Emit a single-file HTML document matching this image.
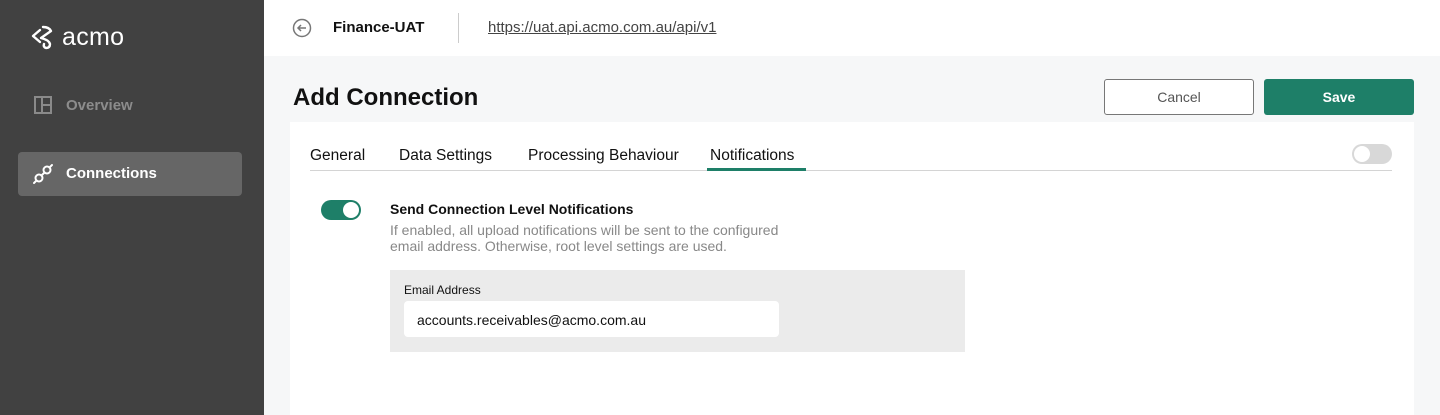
<!DOCTYPE html>
<html><head><meta charset="utf-8"><style>
*{box-sizing:border-box;margin:0;padding:0}
body{width:1440px;height:415px;overflow:hidden;font-family:"Liberation Sans",sans-serif;background:#f6f7f8;position:relative}
.abs{position:absolute}
.side{left:0;top:0;width:264px;height:415px;background:#414141}
.hdr{left:264px;top:0;width:1176px;height:56px;background:#fff}
.card{left:290px;top:122px;width:1124px;height:293px;background:#fff}
.t{position:absolute;white-space:nowrap}
</style></head><body>
<div class="abs side">
  <svg class="abs" style="left:31px;top:24px" width="26" height="26" viewBox="0 0 26 26" fill="none" stroke="#fff" stroke-width="2.4" stroke-linecap="round" stroke-linejoin="round">
    <path d="M9 6 L2 12 L9 18"/><path d="M12 3 Q18 3 20 7 L10 14 Q18 16 19 20 Q19 24 15 24 Q12 23 13 20"/>
  </svg>
  <div class="t" style="left:62px;top:23px;color:#fff;font-size:25px;letter-spacing:0.3px">acmo</div>
  <svg class="abs" style="left:34px;top:96px" width="18" height="18" viewBox="0 0 18 18" fill="none" stroke="#8a8a8a" stroke-width="2"><rect x="1" y="1" width="16" height="16"/><path d="M8 1V17M8 9H17"/></svg>
  <div class="t" style="left:66px;top:97px;color:#8c8c8c;font-size:15px;font-weight:bold">Overview</div>
  <div class="abs" style="left:18px;top:152px;width:224px;height:44px;background:#666;border-radius:4px"></div>
  <svg class="abs" style="left:32px;top:163px" width="22" height="22" viewBox="0 0 22 22" fill="none" stroke="#fff" stroke-width="2" stroke-linecap="round"><circle cx="7" cy="15" r="3.5"/><circle cx="15" cy="7" r="3.5"/><path d="M2 20l2.5-2.5M20 2l-2.5 2.5M9.5 12.5l3-3"/></svg>
  <div class="t" style="left:66px;top:165px;color:#fff;font-size:15px;font-weight:bold">Connections</div>
</div>
<div class="abs hdr">
  <svg class="abs" style="left:28px;top:18px" width="20" height="20" viewBox="0 0 20 20" fill="none" stroke="#777" stroke-width="1.5"><circle cx="10" cy="10" r="8.5"/><path d="M14 10H6M9 7l-3 3 3 3"/></svg>
  <div class="t" style="left:69px;top:19px;font-size:15px;font-weight:bold;color:#111">Finance-UAT</div>
  <div class="abs" style="left:194px;top:13px;width:1px;height:30px;background:#ccc"></div>
  <div class="t" style="left:224px;top:19px;font-size:15px;color:#444;text-decoration:underline">https://uat.api.acmo.com.au/api/v1</div>
</div>
<div class="t" style="left:293px;top:84px;font-size:24px;font-weight:bold;color:#111">Add Connection</div>
<div class="abs" style="left:1104px;top:79px;width:150px;height:36px;border:1px solid #777;border-radius:3px;background:#fff;color:#555;font-size:14px;text-align:center;line-height:34px">Cancel</div>
<div class="abs" style="left:1264px;top:79px;width:150px;height:36px;border-radius:3px;background:#1e7f68;color:#fff;font-size:14px;font-weight:bold;text-align:center;line-height:36px">Save</div>
<div class="abs card"></div>
<div class="t" style="left:310px;top:147px;font-size:15.5px;color:#111">General</div>
<div class="t" style="left:399px;top:147px;font-size:15.5px;color:#111">Data Settings</div>
<div class="t" style="left:528px;top:147px;font-size:15.5px;color:#111">Processing Behaviour</div>
<div class="t" style="left:710px;top:147px;font-size:15.5px;color:#111">Notifications</div>
<div class="abs" style="left:310px;top:170px;width:1082px;height:1px;background:#d4d4d4"></div>
<div class="abs" style="left:707px;top:168px;width:99px;height:3px;background:#1e7f68"></div>
<div class="abs" style="left:1352px;top:144px;width:40px;height:20px;border-radius:10px;background:#d8d8d8"></div>
<div class="abs" style="left:1354px;top:146px;width:16px;height:16px;border-radius:8px;background:#fff"></div>
<div class="abs" style="left:321px;top:200px;width:40px;height:20px;border-radius:10px;background:#1e7f68"></div>
<div class="abs" style="left:343px;top:202px;width:16px;height:16px;border-radius:8px;background:#fff"></div>
<div class="t" style="left:390px;top:201px;font-size:14px;font-weight:bold;color:#111">Send Connection Level Notifications</div>
<div class="t" style="left:390px;top:222px;font-size:14px;line-height:16px;color:#888">If enabled, all upload notifications will be sent to the configured<br>email address. Otherwise, root level settings are used.</div>
<div class="abs" style="left:390px;top:270px;width:575px;height:82px;background:#ebebeb"></div>
<div class="t" style="left:404px;top:283px;font-size:12px;color:#111">Email Address</div>
<div class="abs" style="left:404px;top:301px;width:375px;height:36px;background:#fff;border-radius:4px"></div>
<div class="t" style="left:417px;top:312px;font-size:14px;color:#111">accounts.receivables@acmo.com.au</div>
</body></html>
